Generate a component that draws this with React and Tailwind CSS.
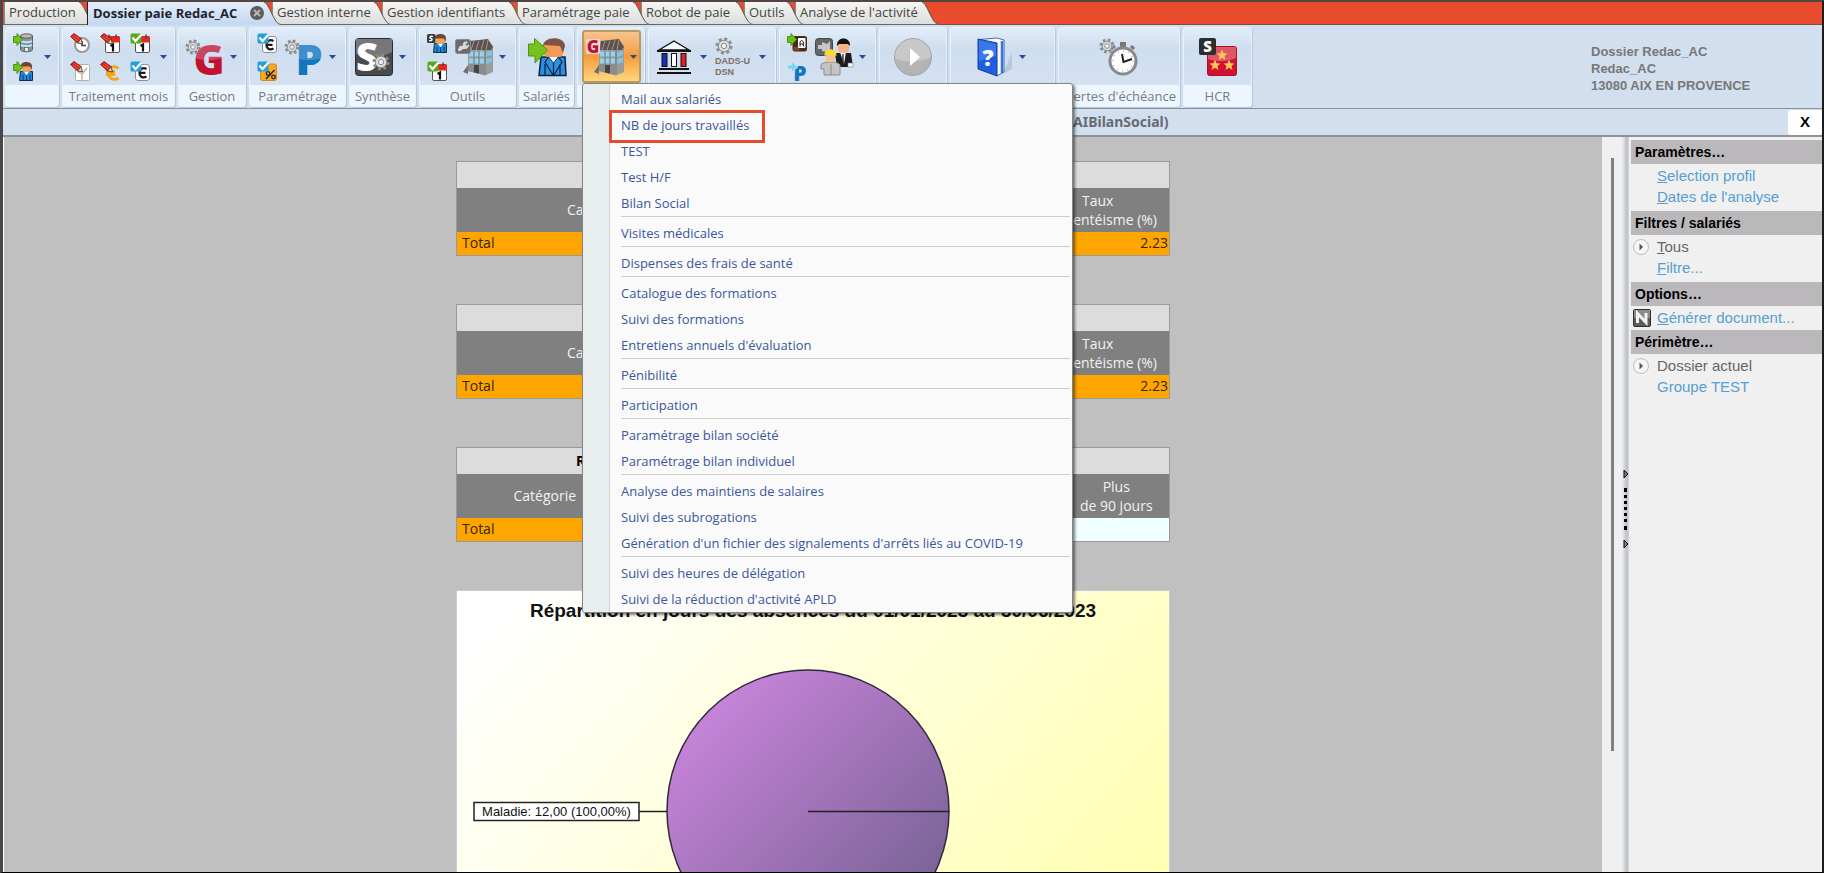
import React from "react";

/* ---------- drawing helpers ---------- */

const Gear = ({ x, y, r = 6 }) => (
  <g>
    <circle cx={x} cy={y} r={r} fill="none" stroke="#8b8b8b" strokeWidth="3" strokeDasharray={`${r * 0.42} ${r * 0.365}`} />
    <circle cx={x} cy={y} r={r - 1.2} fill="#dcdcdc" stroke="#8b8b8b" strokeWidth="1" />
    <circle cx={x} cy={y} r={r * 0.38} fill="#eef3fa" stroke="#8b8b8b" strokeWidth="1" />
  </g>
);

const Letter = ({ x, y, size, fill, children, family = "Open Sans", anchor = "middle" }) => (
  <text x={x} y={y} fontSize={size} fill={fill} textAnchor={anchor} fontWeight="800" fontFamily={`"${family}", sans-serif`}>
    {children}
  </text>
);

const Small = ({ children }) => (
  <svg className="block size-5 shrink-0" viewBox="0 0 20 20" aria-hidden="true">{children}</svg>
);

const Big = ({ children }) => (
  <svg className="block size-[38px] shrink-0 overflow-visible" viewBox="0 0 38 38" aria-hidden="true">{children}</svg>
);

const Pencil = () => (
  <g>
    <path d="M0.500 3.500 L4 0.500 L11 5.500 L7.500 10 Z" fill="#d8231c" stroke="#7a1410" strokeWidth="0.800" />
    <path d="M2.500 4 L9 8.500 M4.500 2.500l5.500 4" stroke="#ff7a60" strokeWidth="0.700" />
    <path d="M7.500 10 L11 5.500 L12.500 11 Z" fill="#f2cf9b" stroke="#3a2a1a" strokeWidth="0.800" />
  </g>
);

const Check = ({ color }) => (
  <g>
    <rect x="0.500" y="0.500" width="11" height="10" rx="1.500" fill={color} />
    <path d="M2.500 4.500 L5.500 8 L11.500 1.500" fill="none" stroke="#fff" strokeWidth="2.200" />
  </g>
);

const CalendarSheet = () => (
  <g>
    <rect x="5.500" y="3.500" width="14" height="16" rx="1.500" fill="#fff" stroke="#555" />
    <rect x="5" y="3" width="15" height="6.500" rx="1.500" fill="#e02a20" />
    <path d="M9 1.500v3.500M16 1.500v3.500" stroke="#444" strokeWidth="1.400" />
    <path d="M10.500 13 L13 11.500 V18.500" fill="none" stroke="#111" strokeWidth="2.200" />
  </g>
);

const EuroSheet = () => (
  <g>
    <rect x="5.500" y="3.500" width="14" height="16" rx="2.500" fill="#fff" stroke="#8f8f8f" />
    <path d="M16.500 8 C13 6 9.500 8 9.500 11.800 C9.500 15.800 13 17.500 16.500 15.500 M9.500 11.800h6" fill="none" stroke="#1c1c1c" strokeWidth="2.200" />
  </g>
);

const PersonShape = () => (
  <g>
    <path d="M7.500 10.500 L19.500 10.500 L19.500 19.500 L6.500 19.500 Z" fill="#1f8be0" stroke="#0e2c48" strokeWidth="1" />
    <path d="M11 10.500h5l-2.500 4z" fill="#fff" />
    <rect x="9" y="2.500" width="9" height="8.500" rx="2" fill="#f4a15c" />
    <path d="M8 5.500 C7 -0.500 19.500 -0.500 19 5.500 L18.500 9 L17 5.500 H8Z" fill="#6f4635" />
    <path d="M13.500 14v5.500M10 13.500v6M17 13.500v6" stroke="#0e2c48" strokeWidth="0.900" />
  </g>
);

const SmallArrow = () => (
  <path d="M0.500 3.500h3.500V0.500L9.500 6.500 L4 12.500V9.500H0.500Z" fill="#6cc11c" stroke="#3e8a0c" strokeWidth="0.900" />
);

/* ---------- small icons ---------- */

const ServerIcon = () => (
  <Small>
    <path d="M7.500 3v13.500c0 3 12 3 12 0V3z" fill="#8496a2" stroke="#565f66" />
    <ellipse cx="13.500" cy="3" rx="6" ry="2.200" fill="#c9b5ab" stroke="#5d5d5d" />
    <path d="M8 8c2 1.500 9 1.500 11 0M8 12c2 1.500 9 1.500 11 0" fill="none" stroke="#c2e6f5" strokeWidth="2" />
    <rect x="11.500" y="14.500" width="4" height="4" fill="#e9e9e9" stroke="#555" strokeWidth="0.700" />
    <SmallArrow />
  </Small>
);
const PersonInIcon = () => (<Small><PersonShape /><SmallArrow /></Small>);
const ClockEdit = () => (
  <Small>
    <circle cx="12" cy="12" r="7" fill="#fff" stroke="#9a9a9a" strokeWidth="2" />
    <path d="M12 8v4.500h4" fill="none" stroke="#444" strokeWidth="1.500" />
    <Pencil />
  </Small>
);
const CalEdit = () => (<Small><CalendarSheet /><Pencil /></Small>);
const CalCheck = () => (<Small><CalendarSheet /><Check color="#56a81d" /></Small>);
const DocEdit = () => (
  <Small>
    <rect x="5.500" y="3.500" width="14" height="16" rx="1" fill="#fdfdfb" stroke="#b5b0a5" />
    <path d="M12 19v-6l5-6M12 13l-4-2" fill="none" stroke="#b5b0a5" strokeWidth="1.300" />
    <Pencil />
  </Small>
);
const EuroEdit = () => (
  <Small>
    <path d="M18.500 7.500 C13 3.500 8.500 7 8.500 12 C8.500 17.500 13.500 20 18.500 17 M6 10.500h9 M6 13.500h9" fill="none" stroke="#f5a21c" strokeWidth="2.800" />
    <Pencil />
  </Small>
);
const EuroCheck = () => (<Small><EuroSheet /><Check color="#23a0dc" /></Small>);
const PercentCheck = () => (
  <Small>
    <rect x="3.500" y="3" width="16" height="16.500" rx="2" fill="#f7a928" stroke="#d5851a" />
    <path d="M17.500 9 L9 18" stroke="#2a2118" strokeWidth="1.500" />
    <circle cx="11" cy="12.500" r="1.800" fill="none" stroke="#2a2118" strokeWidth="1.300" />
    <circle cx="16.500" cy="16" r="1.800" fill="none" stroke="#2a2118" strokeWidth="1.300" />
    <Check color="#23a0dc" />
  </Small>
);
const PersonS = () => (
  <Small>
    <PersonShape />
    <rect x="0" y="1" width="8.500" height="9" rx="1.500" fill="#3c3c3c" />
    <path d="M6 3.500 C3.500 2.500 1.500 5 4 5.500 C6.500 6 4.500 8.500 2 7.500" fill="none" stroke="#fff" strokeWidth="1.300" />
  </Small>
);
const BadgeIn = () => (
  <Small>
    <rect x="5.500" y="3" width="14.500" height="15.500" rx="2.500" fill="#4b2917" />
    <path d="M6.500 14h6v3.500h-6z" fill="#7a4a30" />
    <rect x="11" y="5" width="7.500" height="10" rx="1" fill="#fff" />
    <path d="M13 13.500v-4.500l1.700-1.800 1.700 1.800V13.500M13 11h3.400" fill="none" stroke="#222" />
    <SmallArrow />
  </Small>
);
const ParamIn = () => (
  <Small>
    <Letter x="13" y="19.500" size="21" fill="#1276bf">P</Letter>
    <path d="M0.500 4h4V0.500L11 6 L4.500 11.500V8H0.500Z" fill="#7fd0f5" stroke="#c9edfc" strokeWidth="0.800" />
  </Small>
);

/* ---------- large icons ---------- */

const GestionIcon = () => (
  <Big>
    <Letter x="23" y="37" size="42" fill="#c3122f">G</Letter>
    <path d="M9 5h29v14c-9 4-20 4-29 1z" fill="#d9e5f4" opacity="0.250" />
    <Gear x={7} y={9} r={6} />
  </Big>
);
const ParametrageIcon = () => (
  <Big>
    <Letter x="24" y="37" size="43" fill="#1276bf">P</Letter>
    <path d="M12 5h26v14c-8 4-19 4-26 1z" fill="#d9e5f4" opacity="0.220" />
    <Gear x={7} y={9} r={6} />
  </Big>
);
const SyntheseIcon = () => (
  <Big>
    <rect x="0.500" y="0.500" width="37" height="37" rx="3" fill="#4a4a4c" stroke="#2c2c2e" />
    <path d="M1 1h36v13C26 20 12 20 1 16z" fill="#77777a" />
    <Letter x="12" y="33" size="38" fill="#fff">S</Letter>
    <Gear x={26} y={24} r={7} />
  </Big>
);

const BuildingShape = () => (
  <g>
    <path d="M13 4 L32 1.500 L38 8 L38 34 L30 37.500 L13 33 Z" fill="#9b9b9b" />
    <path d="M15 3 L33 1 L38 9 L36 12 L14 12 Z" fill="#5e524f" />
    <path d="M19 3l-3 9M24 2.500l-3 9.500M29 2l-3 10M33 2l-2 10" stroke="#a39894" strokeWidth="1" />
    <path d="M14 13.500h15v5H14zM14 20.500h15v5H14z" fill="#8fd4f0" />
    <path d="M31 14l6-1.500v4.500l-6 2zM31 21l6-1.500v4.500l-6 2z" fill="#7fc4e2" />
    <path d="M19 13v13M24 13v13M30 12v25" stroke="#7f7f7f" strokeWidth="1.200" />
    <path d="M13 26h17v11l-17-4z" fill="#8c8c8c" />
    <path d="M19 27h5v8.500l-5-1z" fill="#454545" />
    <path d="M8 34 L13 27 V36z" fill="#6f6f6f" />
  </g>
);
const OutilsIcon = () => (
  <Big>
    <BuildingShape />
    <rect x="0.500" y="1.500" width="15" height="14" rx="2" fill="#6a6a6c" stroke="#8c8c8c" />
    <path d="M3 13 C3 9 5 7 8 8 C7 5 10 2.500 13 4 L10.500 6.500 L12 8 L14 6 C14.500 9 12 11.500 9 11 C7 11 6 14 3 13Z" fill="#d9d9d9" />
  </Big>
);
const GestionBuildingIcon = () => (
  <Big>
    <BuildingShape />
    <rect x="0" y="1" width="14" height="15" rx="2" fill="#e9d9d9" />
    <Letter x="7" y="14.500" size="17" fill="#c3122f">G</Letter>
  </Big>
);
const SalarieIcon = () => (
  <Big>
    <path d="M13 19 L37 19 L38 37.500 L11 37.500 Z" fill="#2b8fe3" stroke="#0c2338" strokeWidth="1.500" />
    <path d="M20 18h11l-5.500 7z" fill="#fff" stroke="#0c2338" strokeWidth="0.800" />
    <path d="M25.500 25v12M32 26v11M17 26v11M20 20l-3 4 8 13M31 20l3 4-8 13" fill="none" stroke="#0c2338" strokeWidth="1.200" />
    <rect x="16" y="4" width="19" height="15" rx="4" fill="#f39a55" />
    <path d="M15 9 C14 -2.500 37 -2.500 37 8 L35 15 L32 8 L16 7Z" fill="#7c5546" />
    <path d="M0.500 6h6V0.500L19.500 12 L7 25V18H0.500Z" fill="#74c21c" stroke="#4d9410" />
  </Big>
);
const BankIcon = () => (
  <Big>
    <path d="M18 3 L33 12 H3 Z" fill="#f5f8fc" stroke="#111" strokeWidth="1.400" />
    <path d="M1 13h34" stroke="#111" strokeWidth="2" />
    <rect x="6" y="15.500" width="5" height="13" fill="#1c2fb0" stroke="#111" />
    <rect x="15.500" y="15.500" width="5" height="13" fill="#fff" stroke="#111" />
    <rect x="25" y="15.500" width="5" height="13" fill="#e01f26" stroke="#111" />
    <path d="M3 31h30M1 35h34" stroke="#111" strokeWidth="2" />
  </Big>
);
const DadsIcon = () => (
  <Big>
    <Gear x={9} y={8} r={7} />
    <Letter x="0" y="26" size="9" fill="#7c6f66" family="Liberation Sans" anchor="start">DADS-U</Letter>
    <Letter x="0" y="37" size="9" fill="#7c6f66" family="Liberation Sans" anchor="start">DSN</Letter>
  </Big>
);
const PeopleIcon = () => (
  <Big>
    <rect x="0.500" y="0.500" width="17" height="17" rx="3" fill="#666" stroke="#444" />
    <path d="M3 7h4V4l5 2 3-3v10l-4 1-4-1v-2H3z" fill="#c6c6c6" />
    <path d="M20 15h16l2 14h-16z" fill="#1b1b1f" />
    <path d="M25 14h6l-2 12z" fill="#fff" />
    <path d="M28 16v9" stroke="#333" strokeWidth="1.500" />
    <rect x="23" y="3" width="11" height="12" rx="4" fill="#f2b487" />
    <path d="M22 8c-1-10 14-10 13 0l-2-2h-9z" fill="#111" />
    <rect x="33" y="25" width="5" height="4" fill="#fff" stroke="#777" strokeWidth="0.600" />
    <path d="M6 27c0-4 18-4 19 0v10H9V31H6z" fill="#c4c4c4" stroke="#8c8c8c" />
    <path d="M16 26v11" stroke="#8c8c8c" />
    <rect x="11" y="14" width="9" height="10" rx="3" fill="#f6c28c" />
    <path d="M9.500 18c-1-9 13-9 12 0l-2-1h-8z" fill="#f7dc2c" />
  </Big>
);
const PlayIcon = () => (
  <Big>
    <circle cx="19" cy="19" r="18.500" fill="#b4b4b4" stroke="#a3a3a3" />
    <path d="M1 19a18 18 0 0 1 36 0c-9 5-24 6-36 2z" fill="#c8c8c8" />
    <path d="M16 10 L26 19 L16 28 Z" fill="#fff" />
  </Big>
);
const HelpIcon = () => (
  <Big>
    <path d="M28 36l9-5V14z" fill="#a9b8d2" opacity="0.600" />
    <path d="M4 1.500 L22 0 L29 2 V34 L22 38 Z" fill="#f7f9ff" stroke="#1b47a8" strokeWidth="0.800" />
    <path d="M27 3v32" stroke="#3f74da" strokeWidth="2.500" />
    <path d="M3 1 L22 5 V38 L3 31 Z" fill="#1f5fdf" stroke="#123f9f" />
    <path d="M4 2 L21 6 V18 L4 23z" fill="#4c88f2" opacity="0.600" />
    <Letter x="13" y="28" size="22" fill="#fff">?</Letter>
  </Big>
);
const StopwatchIcon = () => (
  <Big>
    <rect x="20" y="4" width="6" height="6" fill="#777" />
    <path d="M11 11l4-3M34 11l-3-3" stroke="#777" strokeWidth="3" />
    <circle cx="23" cy="23" r="13" fill="#fff" stroke="#888" strokeWidth="3" />
    <circle cx="23" cy="23" r="10" fill="none" stroke="#bbb" strokeWidth="1.500" strokeDasharray="1 4.200" />
    <path d="M22 16l1.500 8L32 21" fill="none" stroke="#222" strokeWidth="2" />
    <Gear x={7} y={8} r={6} />
  </Big>
);
const STAR = "M0 -5.500 L1.600 -1.800 L5.500 -1.600 L2.500 1 L3.500 5 L0 2.800 L-3.500 5 L-2.500 1 L-5.500 -1.600 L-1.600 -1.800 Z";
const HcrIcon = () => (
  <Big>
    <rect x="8.500" y="8.500" width="29" height="29" rx="2" fill="#cf1230" stroke="#b00d28" />
    <path d="M9 9h28v11c-9 4-20 4-28 1z" fill="#e05568" />
    <path d={STAR} transform="translate(23 17)" fill="#fbc457" />
    <path d={STAR} transform="translate(16 27)" fill="#fbc457" />
    <path d={STAR} transform="translate(30 27)" fill="#fbc457" />
    <rect x="0" y="0" width="17" height="17" rx="2" fill="#2d2d2f" />
    <Letter x="8.500" y="14" size="15" fill="#fff">S</Letter>
  </Big>
);

const Caret = () => (
  <svg className="block h-1 w-[7px] shrink-0" viewBox="0 0 7 4" aria-hidden="true">
    <path d="M0 0h7L3.500 4z" fill="#2b4a94" />
  </svg>
);

/* ---------- tabs ---------- */

const tabs = [
  { label: "Production", width: "w-[75px]", layer: "z-[8]" },
  { label: "Dossier paie Redac_AC", width: "w-[177px]", layer: "z-[9]", active: true },
  { label: "Gestion interne", width: "w-[102px]", layer: "z-[7]" },
  { label: "Gestion identifiants", width: "w-[127px]", layer: "z-[6]" },
  { label: "Paramétrage paie", width: "w-[116px]", layer: "z-[5]" },
  { label: "Robot de paie", width: "w-[95px]", layer: "z-[4]" },
  { label: "Outils", width: "w-[43px]", layer: "z-[3]" },
  { label: "Analyse de l'activité", width: "w-[127px]", layer: "z-[2]" },
];

function Tab({ tab }) {
  const { label, width, layer, active } = tab;
  return (
    <div className={`relative -mr-[9px] flex h-[23px] shrink-0 ${layer}`}>
      <div
        className={`flex items-center gap-1 whitespace-nowrap border-l pb-[2px] ${width} ${
          active
            ? "justify-between border-[#222] bg-linear-to-b from-[#e4eefa] to-[#c3d7f0] pl-[5px] font-bold text-[#1e2430]"
            : "border-[#8a8a8a] border-b border-b-[#666] bg-linear-to-b from-[#f6f6f4] to-[#dcdcda] pl-1 text-[#444]"
        }`}
      >
        <button type="button" role="tab" aria-selected={!!active} className="text-[13px] leading-5">{label}</button>
        {active && (
          <button type="button" aria-label="Fermer l'onglet" className="shrink-0">
            <svg className="block size-[14px]" viewBox="0 0 14 14">
              <circle cx="7" cy="7" r="7" fill="#5c5c5c" />
              <path d="M4 4l6 6M10 4l-6 6" stroke="#b9b9b9" strokeWidth="1.800" />
            </svg>
          </button>
        )}
      </div>
      <svg className="block h-[23px] w-[17px]" viewBox="0 0 17 23" aria-hidden="true">
        <defs>
          <linearGradient id="slantActive" x1="0" x2="0" y1="0" y2="1"><stop stopColor="#e4eefa" /><stop offset="1" stopColor="#c3d7f0" /></linearGradient>
          <linearGradient id="slantIdle" x1="0" x2="0" y1="0" y2="1"><stop stopColor="#f6f6f4" /><stop offset="1" stopColor="#dcdcda" /></linearGradient>
        </defs>
        <path d="M0 0 C3 1 5 6 8 12 C11 18 13 22 17 22.500 L17 23 L0 23Z" fill={active ? "url(#slantActive)" : "url(#slantIdle)"} />
        <path d="M0 0 C3 1 5 6 8 12 C11 18 13 22 17 22.500" fill="none" stroke="#555" />
        {!active && <path d="M0 22.500H17" stroke="#666" />}
      </svg>
    </div>
  );
}

/* ---------- ribbon ---------- */

function Group({ width, label = "", children, className = "" }) {
  return (
    <section className={`relative flex h-[80px] shrink-0 flex-col rounded-[3px] border border-[#e9f2fc] shadow-[1px_1px_0_#b3c8e2] ${width}`}>
      <div className={`flex flex-1 items-center bg-linear-to-b from-[#e2edf9] via-[#cfdeef] via-35% to-[#d3e1f1] ${className}`}>{children}</div>
      <div className="flex h-[21px] items-center justify-center whitespace-nowrap bg-[#edf6fe] pt-px text-[13px] leading-5 text-[#757b85]">{label}</div>
    </section>
  );
}

const Tool = ({ label, children, className = "" }) => (
  <button type="button" aria-label={label} className={`flex shrink-0 items-center gap-[6px] ${className}`}>{children}</button>
);

const Stack = ({ children }) => <div className="flex shrink-0 flex-col gap-2">{children}</div>;

const menuGroups = [
  ["Mail aux salariés", "NB de jours travaillés", "TEST", "Test H/F", "Bilan Social"],
  ["Visites médicales"],
  ["Dispenses des frais de santé"],
  ["Catalogue des formations", "Suivi des formations", "Entretiens annuels d'évaluation"],
  ["Pénibilité"],
  ["Participation"],
  ["Paramétrage bilan société", "Paramétrage bilan individuel"],
  ["Analyse des maintiens de salaires", "Suivi des subrogations", "Génération d'un fichier des signalements d'arrêts liés au COVID-19"],
  ["Suivi des heures de délégation", "Suivi de la réduction d'activité APLD"],
];

function DropMenu() {
  return (
    <div role="menu" className="absolute top-[55px] left-1 z-30 flex w-[491px] rounded-[3px] border border-[#858585] bg-[#fafafa] shadow-[2px_2px_3px_rgba(0,0,0,0.5)]">
      <div className="w-[27px] shrink-0 rounded-l-[3px] border-r border-[#cfd4d4] bg-[#e8eeee]" />
      <div className="flex-1 pt-[2px] pr-[2px] pl-[11px]">
        {menuGroups.map((group, i) => (
          <div key={group[0]} className={i ? "border-t border-[#cdcdcd] pt-[3px]" : ""}>
            {group.map((item) => (
              <button key={item} type="button" role="menuitem" className="relative block h-[26px] w-full whitespace-nowrap text-left text-[13px] leading-[26px] text-[#3a569c]">
                {item}
                {item === "NB de jours travaillés" && (
                  <span className="absolute -top-[2px] -left-3 h-[33px] w-[156px] border-[3px] border-[#e34d2e]" />
                )}
              </button>
            ))}
          </div>
        ))}
      </div>
    </div>
  );
}

function Ribbon() {
  return (
    <header className="flex h-[84px] shrink-0 items-start justify-between border-b border-[#8b8f96] bg-[#d2dfee] pt-[2px] pl-[2px]">
      <div className="flex gap-[3px]">
        <Group width="w-[54px]" className="gap-[11px] pl-[7px]">
          <Stack><ServerIcon /><PersonInIcon /></Stack>
          <Caret />
        </Group>
        <Group width="w-[113px]" label="Traitement mois" className="gap-[10px] pl-[7px]">
          <Stack><ClockEdit /><DocEdit /></Stack>
          <Stack><CalEdit /><EuroEdit /></Stack>
          <Stack><CalCheck /><EuroCheck /></Stack>
          <Caret />
        </Group>
        <Group width="w-[68px]" label="Gestion" className="pl-[7px]">
          <Tool label="Gestion"><GestionIcon /><Caret /></Tool>
        </Group>
        <Group width="w-[97px]" label="Paramétrage" className="gap-2 pl-[7px]">
          <Stack><EuroCheck /><PercentCheck /></Stack>
          <Tool label="Paramétrage"><ParametrageIcon /><Caret /></Tool>
        </Group>
        <Group width="w-[67px]" label="Synthèse" className="pl-[5px]">
          <Tool label="Synthèse"><SyntheseIcon /><Caret /></Tool>
        </Group>
        <Group width="w-[97px]" label="Outils" className="gap-2 pl-[7px]">
          <Stack><PersonS /><CalCheck /></Stack>
          <Tool label="Outils"><OutilsIcon /><Caret /></Tool>
        </Group>
        <Group width="w-[55px]" label="Salariés" className="justify-center">
          <Tool label="Salariés"><SalarieIcon /></Tool>
        </Group>
        <Group width="w-[68px]" className="pl-1">
          <Tool
            label="Gestion sociale"
            className="h-[53px] w-[59px] justify-center rounded-[3px] border-2 border-[#b99a62] bg-linear-to-b from-[#f6c48a] via-[#f79a3c] via-50% to-[#fdd77a]"
          >
            <GestionBuildingIcon /><Caret />
          </Tool>
          <DropMenu />
        </Group>
        <Group width="w-[128px]" className="gap-2 pl-[7px]">
          <Tool label="Organismes"><BankIcon /><Caret /></Tool>
          <Tool label="DADS-U DSN"><DadsIcon /><Caret /></Tool>
        </Group>
        <Group width="w-[97px]" className="gap-2 pl-[7px]">
          <Stack><BadgeIn /><ParamIn /></Stack>
          <Tool label="Utilisateurs"><PeopleIcon /><Caret /></Tool>
        </Group>
        <Group width="w-[68px]" className="justify-center">
          <Tool label="Lancer"><PlayIcon /></Tool>
        </Group>
        <Group width="w-[105px]" className="pl-6">
          <Tool label="Aide"><HelpIcon /><Caret /></Tool>
        </Group>
        <Group width="w-[122px]" label="Alertes d'échéance" className="justify-center">
          <Tool label="Alertes d'échéance"><StopwatchIcon /></Tool>
        </Group>
        <Group width="w-[69px]" label="HCR" className="justify-center">
          <Tool label="HCR"><HcrIcon /></Tool>
        </Group>
      </div>
      <address className="w-[231px] pt-4 font-['Liberation_Sans',sans-serif] text-[13px] leading-[17px] font-bold text-[#777] not-italic">
        Dossier Redac_AC<br />Redac_AC<br />13080 AIX EN PROVENCE
      </address>
    </header>
  );
}

/* ---------- report ---------- */

const th = "bg-[#808080] px-1 text-center text-[14px] leading-[19px] font-normal text-[#f2f2f2]";

function AbsenceTable() {
  return (
    <table className="w-full table-fixed border-collapse border border-[#9a9a9a]">
      <colgroup><col className="w-[283px]" /><col /><col className="w-[143px]" /></colgroup>
      <thead>
        <tr className="h-[26px] bg-[#dcdcdc]"><th colSpan={3} /></tr>
        <tr className="h-[44px]">
          <th className={th}>Catégorie</th>
          <th className={th} />
          <th className={`${th} whitespace-nowrap`}>Taux<br />d'absentéisme (%)</th>
        </tr>
      </thead>
      <tbody>
        <tr className="h-[24px] bg-[#ffa500] text-[14px] leading-5 text-[#33270a]">
          <td className="pl-[5px]">Total</td><td /><td className="pr-px text-right">2.23</td>
        </tr>
      </tbody>
    </table>
  );
}

function DurationTable() {
  return (
    <table className="w-full table-fixed border-collapse border border-[#9a9a9a]">
      <colgroup><col className="w-[176px]" /><col /><col className="w-[106px]" /></colgroup>
      <thead>
        <tr className="h-[26px] bg-[#dcdcdc]">
          <th colSpan={3} className="pl-[119px] text-left text-[14px] leading-5 font-bold text-black">Répartition par durée d'absence</th>
        </tr>
        <tr className="h-[44px]">
          <th className={th}>Catégorie</th>
          <th className={th} />
          <th className={th}>Plus<br />de 90 jours</th>
        </tr>
      </thead>
      <tbody>
        <tr className="h-[24px] text-[14px] leading-5 text-[#33270a]">
          <td className="bg-[#ffa500] pl-[5px]">Total</td><td className="bg-[#f0ffff]" /><td className="bg-[#f0ffff]" />
        </tr>
      </tbody>
    </table>
  );
}

function PieChart() {
  return (
    <figure className="w-full border border-[#c3cbdc]">
      <svg className="block w-full" viewBox="0 0 712 440" role="img" aria-label="Répartition en jours des absences">
        <defs>
          <linearGradient id="paper" gradientUnits="userSpaceOnUse" x1="80" y1="-20" x2="600" y2="440">
            <stop stopColor="#ffffff" /><stop offset="1" stopColor="#ffffb0" />
          </linearGradient>
          <linearGradient id="slice" x1="0.150" y1="0.150" x2="0.850" y2="0.850">
            <stop stopColor="#c583d8" /><stop offset="1" stopColor="#7b6397" />
          </linearGradient>
        </defs>
        <rect width="712" height="440" fill="url(#paper)" />
        <text x="356" y="26" textAnchor="middle" fontFamily='"Liberation Sans", sans-serif' fontSize="19" fontWeight="700" fill="#111">
          Répartition en jours des absences du 01/01/2023 au 30/06/2023
        </text>
        <circle cx="351" cy="220" r="141" fill="url(#slice)" stroke="#33283c" strokeWidth="1.500" />
        <path d="M351 220.500H492M182 220.500H210" stroke="#222" strokeWidth="1.500" />
        <rect x="17" y="211.500" width="165" height="18" fill="#fff" stroke="#222" strokeWidth="1.500" />
        <text x="99.500" y="225" textAnchor="middle" fontFamily='"Liberation Sans", sans-serif' fontSize="13" fill="#111">
          Maladie: 12,00 (100,00%)
        </text>
      </svg>
    </figure>
  );
}

/* ---------- side panel ---------- */

const Bullet = () => (
  <svg className="block size-4" viewBox="0 0 16 16" aria-hidden="true">
    <circle cx="8" cy="8" r="7.500" fill="#f6f6f6" stroke="#bdbdbd" />
    <path d="M6.500 4.500 L10 8 L6.500 11.500Z" fill="#555" />
  </svg>
);
const DocIcon = () => (
  <svg className="block size-[18px]" viewBox="0 0 18 18" aria-hidden="true">
    <rect x="0.500" y="0.500" width="17" height="17" rx="1.500" fill="#5c5c5c" stroke="#2f2f2f" />
    <path d="M1 1h16v8H1z" fill="#8b8b8b" />
    <path d="M4.500 14V4.500L13 13.500V4" fill="none" stroke="#f2f2f2" strokeWidth="3" />
  </svg>
);

const sections = [
  { title: "Paramètres…", rows: [{ text: "Selection profil", key: true }, { text: "Dates de l'analyse", key: true }] },
  { title: "Filtres / salariés", rows: [{ text: "Tous", key: true, current: true }, { text: "Filtre...", key: true }] },
  { title: "Options…", rows: [{ text: "Générer document...", key: true, doc: true }] },
  { title: "Périmètre…", rows: [{ text: "Dossier actuel", current: true }, { text: "Groupe TEST" }] },
];

function SidePanel() {
  return (
    <aside className="w-[193px] shrink-0 bg-[#f0f0f0] pt-[3px] pl-[2px] font-['Liberation_Sans',sans-serif]">
      {sections.map((s) => (
        <section key={s.title} className={s.rows.length > 1 ? "pb-1" : "pb-[2px]"}>
          <h2 className="h-6 bg-[#bbb8bb] pl-1 text-[14px] leading-[25px] font-bold text-black">{s.title}</h2>
          <ul className="pt-px">
            {s.rows.map((r) => (
              <li key={r.text} className="flex h-[21px] items-center">
                <span className="flex w-[26px] shrink-0 items-center pl-[2px]">{r.doc ? <DocIcon /> : r.current && <Bullet />}</span>
                <a href="#" className={`text-[15px] leading-5 whitespace-nowrap ${r.current ? "text-[#666]" : "text-[#559fd3]"}`}>
                  {r.key ? <><span className="underline">{r.text[0]}</span>{r.text.slice(1)}</> : r.text}
                </a>
              </li>
            ))}
          </ul>
        </section>
      ))}
    </aside>
  );
}

const Grip = () => (
  <svg className="block h-[10px] w-1.5" viewBox="0 0 6 10" aria-hidden="true"><path d="M1 1l4 4-4 4z" fill="#777" stroke="#111" /></svg>
);

export default function App() {
  return (
    <div className="flex h-screen flex-col overflow-hidden border-t-2 border-r-2 border-b border-l-[3px] border-t-[#544545] border-r-[#1c1c1c] border-b-black border-l-[#4a474a] bg-[#f0f0f0] font-['Open_Sans','Noto_Sans',sans-serif]">
      <nav role="tablist" className="flex h-[23px] shrink-0 border-b border-[#705048] bg-[#e84c2c] pl-px">
        {tabs.map((t) => <Tab key={t.label} tab={t} />)}
      </nav>
      <Ribbon />
      <div className="flex h-[28px] shrink-0 items-center justify-center border-b-2 border-[#8e9296] bg-[#d2dfee]">
        <div className="flex-1" />
        <h1 className="w-[512px] text-right font-['Noto_Sans',sans-serif] text-[14px] leading-5 font-bold text-[#666a72]">Bilan social (AIBilanSocial)</h1>
        <div className="flex flex-1 justify-end">
          <button type="button" aria-label="Fermer" className="h-[25px] w-[34px] rounded-[3px] bg-white font-['Liberation_Sans',sans-serif] text-[15px] leading-5 font-bold text-black">X</button>
        </div>
      </div>
      <div className="flex min-h-0 flex-1">
        <main className="min-w-0 flex-1 overflow-hidden border-l border-white bg-[#c0c0c0] pt-6 pl-5">
          <div className="mx-auto flex w-[714px] flex-col gap-12">
            <AbsenceTable />
            <AbsenceTable />
            <DurationTable />
            <PieChart />
          </div>
        </main>
        <div className="flex w-5 shrink-0 justify-center pt-[21px]">
          <div className="h-[83%] w-[3px] bg-[#808080]" />
        </div>
        <div className="flex w-[7px] shrink-0 flex-col items-center justify-center gap-[9px] bg-linear-to-r from-[#eeeeee] via-[#b9bfc8] via-70% to-[#d5d8dc] pt-2">
          <Grip />
          <div className="h-[42px] border-l-[3px] border-dotted border-black" />
          <Grip />
        </div>
        <SidePanel />
      </div>
    </div>
  );
}
